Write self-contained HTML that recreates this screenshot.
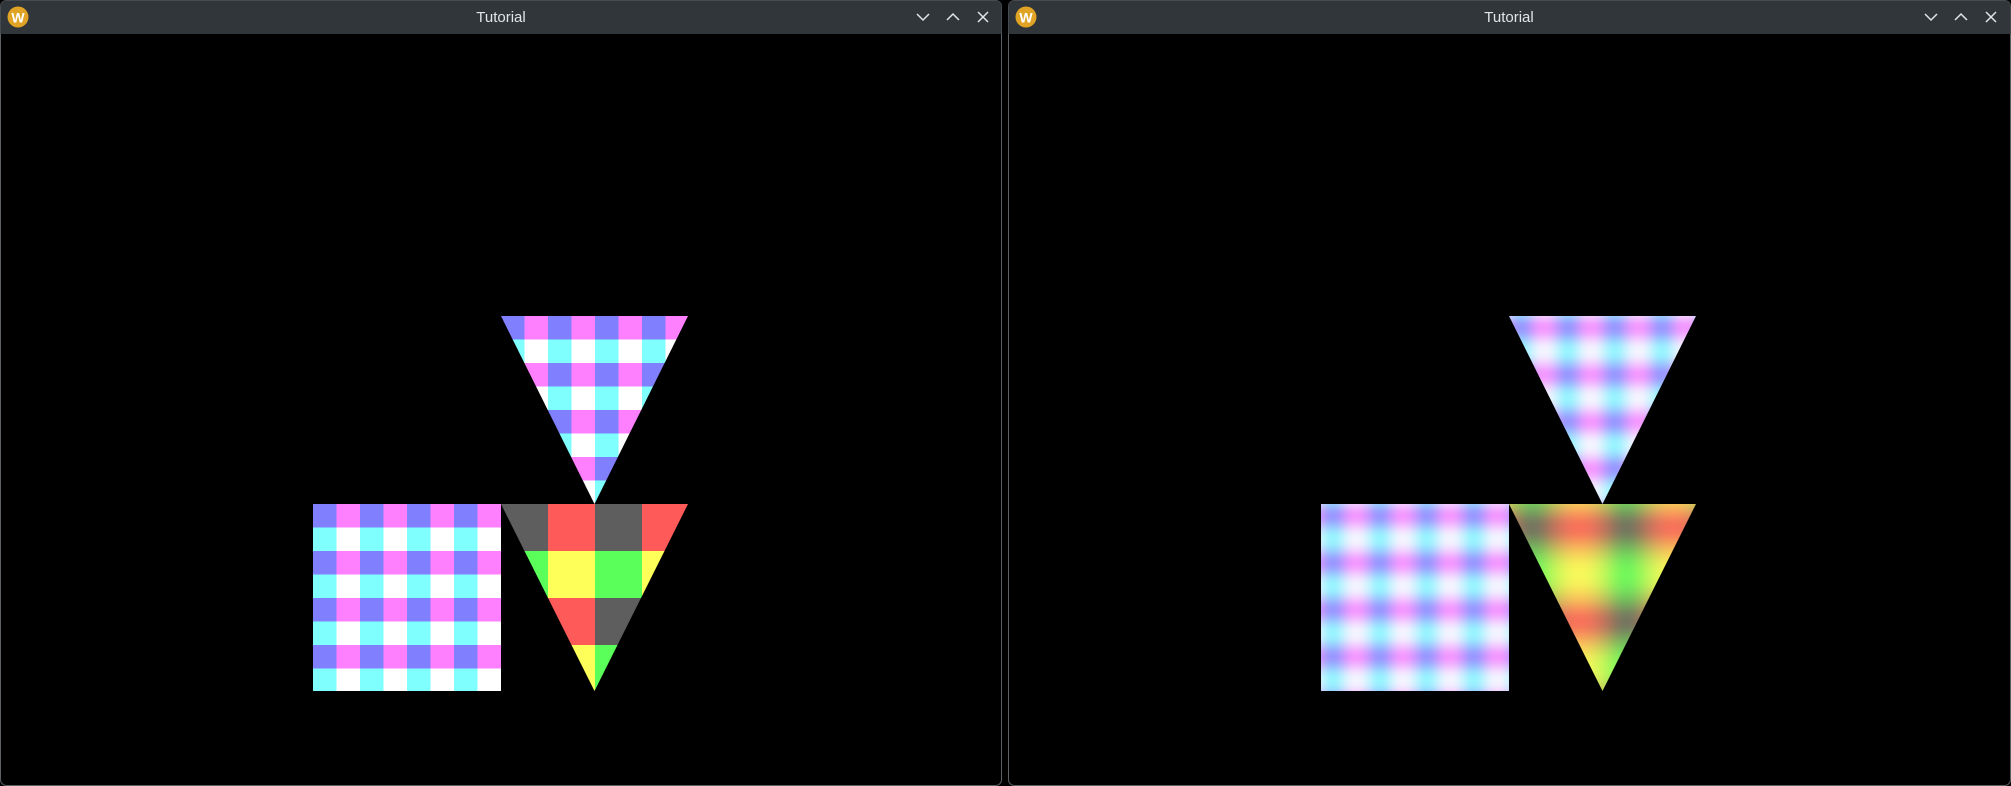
<!DOCTYPE html>
<html><head><meta charset="utf-8"><style>
html,body{margin:0;padding:0;background:#000;width:2011px;height:786px;overflow:hidden}
svg{display:block}
</style></head><body>
<svg width="2011" height="786" viewBox="0 0 2011 786" xmlns="http://www.w3.org/2000/svg">
<defs>
<pattern id="ck" patternUnits="userSpaceOnUse" x="313" y="504" width="47" height="47">
<rect width="23.5" height="23.5" fill="#8080ff"/><rect x="23.5" width="23.5" height="23.5" fill="#ff80ff"/>
<rect y="23.5" width="23.5" height="23.5" fill="#80ffff"/><rect x="23.5" y="23.5" width="23.5" height="23.5" fill="#ffffff"/>
</pattern>
<pattern id="cc" patternUnits="userSpaceOnUse" x="501" y="504" width="94" height="94">
<rect width="47" height="47" fill="#5e5e5e"/><rect x="47" width="47" height="47" fill="#ff5a5a"/>
<rect y="47" width="47" height="47" fill="#5aff5a"/><rect x="47" y="47" width="47" height="47" fill="#ffff5a"/>
</pattern>
<pattern id="ck2" patternUnits="userSpaceOnUse" x="1321" y="504" width="47" height="47">
<rect width="23.5" height="23.5" fill="#8080ff"/><rect x="23.5" width="23.5" height="23.5" fill="#ff80ff"/>
<rect y="23.5" width="23.5" height="23.5" fill="#80ffff"/><rect x="23.5" y="23.5" width="23.5" height="23.5" fill="#ffffff"/>
</pattern>
<pattern id="cc2" patternUnits="userSpaceOnUse" x="1509" y="504" width="94" height="94">
<rect width="47" height="47" fill="#5e5e5e"/><rect x="47" width="47" height="47" fill="#ff5a5a"/>
<rect y="47" width="47" height="47" fill="#5aff5a"/><rect x="47" y="47" width="47" height="47" fill="#ffff5a"/>
</pattern>
<filter id="bl" x="-20%" y="-20%" width="140%" height="140%"><feGaussianBlur stdDeviation="8"/></filter>
<filter id="bl2" x="-20%" y="-20%" width="140%" height="140%"><feGaussianBlur stdDeviation="14"/></filter>
<clipPath id="c1"><rect x="1321" y="504" width="188" height="187"/><polygon points="1509,316 1696,316 1602.5,504"/></clipPath>
<clipPath id="c2"><polygon points="1509,504 1696,504 1602.5,691"/></clipPath>
</defs>

<!-- left window -->
<rect x="0.5" y="0.5" width="1001" height="785" rx="6" fill="#000" stroke="#5b6065"/>
<path d="M0.5 34 V6.5 a6 6 0 0 1 6 -6 H995.5 a6 6 0 0 1 6 6 V34 Z" fill="#31363b"/>
<circle cx="18" cy="17" r="10.5" fill="#e0a324"/>
<text x="18" y="22.5" text-anchor="middle" font-family="Liberation Sans, sans-serif" font-weight="bold" font-size="14" fill="#fff">W</text>
<text x="501" y="22" text-anchor="middle" font-family="Liberation Sans, sans-serif" font-size="15" fill="#e3e5e7">Tutorial</text>
<g stroke="#e3e5e7" stroke-width="1.5" fill="none">
<path d="M917 14 L923 20 L929 14"/><path d="M947 20 L953 14 L959 20"/><path d="M978 12 L988 22 M988 12 L978 22"/>
</g>
<rect x="313" y="504" width="188" height="187" fill="url(#ck)"/>
<polygon points="501,316 688,316 594.5,504" fill="url(#ck)"/>
<polygon points="501,504 688,504 594.5,691" fill="url(#cc)"/>

<!-- right window -->
<rect x="1008.5" y="0.5" width="1002" height="785" rx="6" fill="#000" stroke="#5b6065"/>
<path d="M1008.5 34 V6.5 a6 6 0 0 1 6 -6 H2004.5 a6 6 0 0 1 6 6 V34 Z" fill="#31363b"/>
<circle cx="1026" cy="17" r="10.5" fill="#e0a324"/>
<text x="1026" y="22.5" text-anchor="middle" font-family="Liberation Sans, sans-serif" font-weight="bold" font-size="14" fill="#fff">W</text>
<text x="1509" y="22" text-anchor="middle" font-family="Liberation Sans, sans-serif" font-size="15" fill="#e3e5e7">Tutorial</text>
<g stroke="#e3e5e7" stroke-width="1.5" fill="none">
<path d="M1925 14 L1931 20 L1937 14"/><path d="M1955 20 L1961 14 L1967 20"/><path d="M1986 12 L1996 22 M1996 12 L1986 22"/>
</g>
<g clip-path="url(#c1)"><rect x="1290" y="290" width="430" height="430" fill="url(#ck2)" filter="url(#bl)"/></g>
<g clip-path="url(#c2)"><rect x="1460" y="460" width="290" height="290" fill="url(#cc2)" filter="url(#bl2)"/></g>
</svg>
</body></html>
